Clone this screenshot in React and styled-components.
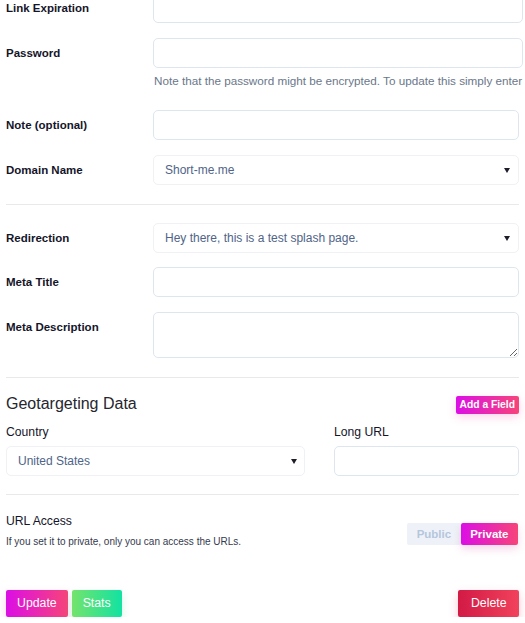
import React from "react";
import styled, { createGlobalStyle } from "styled-components";

const Global = createGlobalStyle`
  html, body { margin: 0; padding: 0; background: #fff; }
  body { font-family: "Liberation Sans", Arial, sans-serif; overflow: hidden; }
  * { box-sizing: border-box; }
`;

const Page = styled.div`
  width: 525px;
  padding: 0 6px;
  margin-top: -7px;
  color: #1b1b2f;
  display: flex;
  flex-direction: column;
`;

const Row = styled.div`
  display: grid;
  grid-template-columns: 147px 1fr;
  margin-bottom: ${(p) => (p.$last ? "14px" : "14.5px")};
  margin-right: ${(p) => (p.$wide ? "-4px" : "0")};
`;

const Label = styled.label`
  font-size: 11.5px;
  font-weight: bold;
  line-height: 14px;
  padding-top: 8px;
  color: #15152a;
`;

const Field = styled.div`
  display: flex;
  flex-direction: column;
`;

const Input = styled.input`
  height: 30px;
  width: 100%;
  border: 1px solid #dde6ef;
  border-radius: 5px;
  background: #fff;
  font-family: inherit;
  font-size: 12px;
  padding: 0 12px;
  outline: none;
`;

const TextArea = styled.textarea`
  height: 46px;
  width: 100%;
  border: 1px solid #dde6ef;
  border-radius: 5px;
  background: #fff;
  font-family: inherit;
  font-size: 12px;
  padding: 6px 12px;
  display: block;
  outline: none;
`;

const SelectWrap = styled.div`
  position: relative;
  &::after {
    content: "";
    position: absolute;
    right: ${(p) => p.$arrowRight || "9px"};
    top: 50%;
    margin-top: -2px;
    border-left: 3px solid transparent;
    border-right: 3px solid transparent;
    border-top: 5px solid #1e1e2a;
    pointer-events: none;
  }
`;

const Select = styled.select`
  appearance: none;
  -webkit-appearance: none;
  height: 30px;
  width: 100%;
  border: 1px solid #f0f1f4;
  border-radius: 5px;
  background: #fff;
  font-family: inherit;
  font-size: 12px;
  color: #506488;
  padding: 0 11px;
  outline: none;
`;

const Note = styled.div`
  font-size: 11.7px;
  line-height: 16px;
  color: #6a778a;
  white-space: nowrap;
  margin: 5px 0 7px 1px;
`;

const Divider = styled.hr`
  width: 100%;
  border: 0;
  border-top: 1px solid #e9e9eb;
  margin: 5px 0 18px;
`;

const HeaderRow = styled.div`
  display: flex;
  justify-content: space-between;
  align-items: center;
  height: 18px;
`;

const Heading = styled.h3`
  margin: 0;
  font-size: 16px;
  font-weight: normal;
  color: #26262e;
  line-height: 18px;
  position: relative;
  top: -1px;
`;

const SmallBtn = styled.button`
  border: 0;
  height: 18px;
  padding: 0 4px;
  font-family: inherit;
  font-size: 10.3px;
  font-weight: bold;
  color: #fff;
  border-radius: 2px;
  background: linear-gradient(90deg, #dc0ee6, #f6447a);
  box-shadow: 0 3px 10px rgba(240, 60, 160, 0.22);
`;

const Grid = styled.div`
  display: grid;
  grid-template-columns: 299px 1fr;
  column-gap: 29px;
  margin-top: 10px;
  margin-bottom: 13px;
`;

const ColLabel = styled.div`
  font-size: 12.2px;
  line-height: 16px;
  color: #15152a;
  margin-bottom: 6px;
`;

const AccessRow = styled.div`
  display: flex;
  justify-content: space-between;
  align-items: flex-start;
`;

const AccessText = styled.div`
  display: flex;
  flex-direction: column;
`;

const AccessTitle = styled.div`
  font-size: 12.2px;
  line-height: 16px;
  color: #15152a;
`;

const AccessDesc = styled.div`
  font-size: 10px;
  line-height: 14px;
  color: #35394d;
  margin-top: 6px;
`;

const Toggle = styled.div`
  display: flex;
  margin-top: 10px;
  margin-right: 1px;
`;

const ToggleBtn = styled.button`
  border: 0;
  height: 22px;
  font-family: inherit;
  font-size: 11.5px;
  font-weight: bold;
  padding: 0 9.5px;
  border-radius: 2px;
  color: ${(p) => (p.$active ? "#fff" : "#b5c6dc")};
  background: ${(p) =>
    p.$active ? "linear-gradient(90deg, #dc0ee6, #f6447a)" : "#eef2f8"};
  box-shadow: ${(p) => (p.$active ? "0 4px 8px rgba(200, 40, 140, 0.18)" : "none")};
`;

const Actions = styled.div`
  display: flex;
  justify-content: space-between;
  margin-top: 41px;
`;

const BtnGroup = styled.div`
  display: flex;
  gap: 4px;
`;

const gradients = {
  pink: "linear-gradient(90deg, #dc0ee6, #f6447a)",
  green: "linear-gradient(90deg, #74e36c, #12e2a2)",
  red: "linear-gradient(90deg, #d21a45, #f1425c)",
};
const shadows = {
  pink: "0 4px 10px rgba(235, 50, 170, 0.22)",
  green: "0 4px 10px rgba(50, 220, 140, 0.22)",
  red: "0 4px 10px rgba(230, 40, 80, 0.25)",
};

const ActionBtn = styled.button`
  border: 0;
  height: 27px;
  padding: 0 ${(p) => p.$pad || "11px"};
  font-family: inherit;
  font-size: 12.3px;
  color: #fff;
  border-radius: 2px;
  background: ${(p) => gradients[p.$tone]};
  box-shadow: ${(p) => shadows[p.$tone]};
`;

export default function App() {
  return (
    <>
      <Global />
      <Page>
        <Row $wide>
          <Label>Link Expiration</Label>
          <Input />
        </Row>
        <Row $wide>
          <Label>Password</Label>
          <Field>
            <Input type="password" />
            <Note>
              Note that the password might be encrypted. To update this simply enter
            </Note>
          </Field>
        </Row>
        <Row>
          <Label>Note (optional)</Label>
          <Input />
        </Row>
        <Row $last>
          <Label>Domain Name</Label>
          <SelectWrap>
            <Select defaultValue="a">
              <option value="a">Short-me.me</option>
            </Select>
          </SelectWrap>
        </Row>
        <Divider />
        <Row>
          <Label>Redirection</Label>
          <SelectWrap>
            <Select defaultValue="a">
              <option value="a">Hey there, this is a test splash page.</option>
            </Select>
          </SelectWrap>
        </Row>
        <Row>
          <Label>Meta Title</Label>
          <Input />
        </Row>
        <Row $last>
          <Label>Meta Description</Label>
          <TextArea />
        </Row>
        <Divider />
        <HeaderRow>
          <Heading>Geotargeting Data</Heading>
          <SmallBtn>Add a Field</SmallBtn>
        </HeaderRow>
        <Grid>
          <div>
            <ColLabel>Country</ColLabel>
            <SelectWrap $arrowRight="8px">
              <Select defaultValue="us">
                <option value="us">United States</option>
              </Select>
            </SelectWrap>
          </div>
          <div>
            <ColLabel>Long URL</ColLabel>
            <Input />
          </div>
        </Grid>
        <Divider />
        <AccessRow>
          <AccessText>
            <AccessTitle>URL Access</AccessTitle>
            <AccessDesc>If you set it to private, only you can access the URLs.</AccessDesc>
          </AccessText>
          <Toggle>
            <ToggleBtn>Public</ToggleBtn>
            <ToggleBtn $active>Private</ToggleBtn>
          </Toggle>
        </AccessRow>
        <Actions>
          <BtnGroup>
            <ActionBtn $tone="pink">Update</ActionBtn>
            <ActionBtn $tone="green">Stats</ActionBtn>
          </BtnGroup>
          <ActionBtn $tone="red" $pad="12.5px">Delete</ActionBtn>
        </Actions>
      </Page>
    </>
  );
}
